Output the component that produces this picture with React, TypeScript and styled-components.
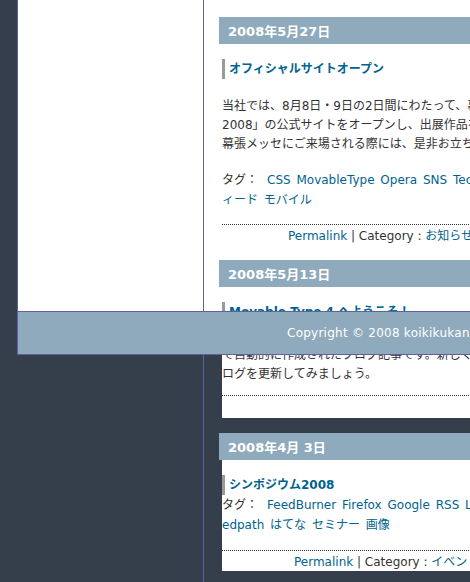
import React from "react";
import styled, { createGlobalStyle } from "styled-components";

const DARK = "#343f4b";
const LINE = "#62629a";
const BAR = "#8eaabc";
const LINK = "#00638f";

const GlobalStyle = createGlobalStyle`
  html, body {
    margin: 0;
    padding: 0;
    background: ${DARK};
  }
  body {
    font-family: "DejaVu Sans", "Noto Sans CJK JP", sans-serif;
    font-size: 12px;
    color: #333;
  }
`;

const Page = styled.div`
  position: relative;
  width: 470px;
  height: 582px;
  overflow: hidden;
  display: flex;
  align-items: flex-start;
  padding-left: 17px;
  box-sizing: border-box;
  background: ${DARK};
`;

const Sidebar = styled.aside`
  flex: 0 0 186px;
  height: 311px;
  box-sizing: border-box;
  border-left: 1px solid ${LINE};
  background: #fff;
`;

const Main = styled.main`
  flex: 0 0 560px;
  align-self: stretch;
  border-left: 1px solid ${LINE};
  padding: 17px 0 0 15px;
  background: linear-gradient(#fff 0, #fff 311px, transparent 311px);
`;

const DateHeader = styled.h2`
  margin: 0;
  height: 25px;
  padding: 2px 0 0 9px;
  line-height: 25px;
  background: ${BAR};
  color: #fff;
  font-size: 13px;
  font-weight: bold;
  white-space: pre;
`;

const EntryBox = styled.div`
  margin: 0 0 15px 3px;
  padding-top: 15px;
  background: #fff;
  overflow: hidden;
`;

const Title = styled.h3`
  margin: 0;
  height: 20px;
  line-height: 21px;
  border-left: 3px solid #999;
  padding-left: 4px;
  font-size: 12px;
  font-weight: bold;
  color: ${LINK};
  white-space: nowrap;
`;

const Body = styled.p<{ $gap: number }>`
  margin: ${(p) => p.$gap}px 0 0;
  line-height: 19px;
  white-space: nowrap;
`;

const Tags = styled.div<{ $gap: number }>`
  margin-top: ${(p) => p.$gap}px;
  line-height: 19.5px;
  white-space: nowrap;
`;

const TagLabel = styled.span`
  margin-right: 9px;
`;

const Tag = styled.a`
  color: ${LINK};
  text-decoration: none;
  margin-right: 2px;
`;

const Meta = styled.div<{ $gap: number; $h: number; $indent: number }>`
  margin-top: ${(p) => p.$gap}px;
  border-top: 1px dotted #333;
  height: ${(p) => p.$h}px;
  padding: 3px 0 0 ${(p) => p.$indent}px;
  line-height: 17px;
  white-space: nowrap;
`;

const MetaLink = styled.a`
  color: ${LINK};
  text-decoration: none;
`;

const Footer = styled.footer`
  position: absolute;
  top: 311px;
  left: 17px;
  right: -300px;
  height: 42px;
  line-height: 43px;
  border: 1px solid ${LINE};
  background: ${BAR};
  color: #fff;
  padding-left: 269px;
  font-size: 12px;
  letter-spacing: 0.25px;
  white-space: nowrap;
`;

const TagList = ({ items }: { items: string[] }) => (
  <>
    {items.map((t, i) => (
      <React.Fragment key={i}>
        <Tag href="#">{t}</Tag>{" "}
      </React.Fragment>
    ))}
  </>
);

const MetaLine = ({ category }: { category: string }) => (
  <>
    <MetaLink href="#">Permalink</MetaLink> | Category : <MetaLink href="#">{category}</MetaLink>
  </>
);

export default function App() {
  return (
    <>
      <GlobalStyle />
      <Page>
        <Sidebar />
        <Main>
          <DateHeader>2008年5月27日</DateHeader>
          <EntryBox>
            <Title>オフィシャルサイトオープン</Title>
            <Body $gap={18}>
              当社では、8月8日・9日の2日間にわたって、幕張メッセで開催される「デジタルコンテンツEXPO
              <br />
              2008」の公式サイトをオープンし、出展作品を紹介しています。
              <br />
              幕張メッセにご来場される際には、是非お立ち寄りください。
            </Body>
            <Tags $gap={17}>
              <div>
                <TagLabel>タグ：</TagLabel>
                <TagList items={["CSS", "MovableType", "Opera", "SNS", "Technorati", "フ"]} />
              </div>
              <div>
                <TagList items={["ィード", "モバイル"]} />
              </div>
            </Tags>
            <Meta $gap={14} $h={17} $indent={66}>
              <MetaLine category="お知らせ" />
            </Meta>
          </EntryBox>

          <DateHeader>2008年5月13日</DateHeader>
          <EntryBox>
            <Title>Movable Type 4 へようこそ！</Title>
            <Body $gap={5}>
              これは、Movable Type 4 のインストール完了と同時に、自
              <br />
              で自動的に作成されたブログ記事です。新しくブ
              <br />
              ログを更新してみましょう。
            </Body>
            <Meta $gap={11} $h={19} $indent={66} />
          </EntryBox>

          <DateHeader>2008年4月 3日</DateHeader>
          <EntryBox>
            <Title>シンポジウム2008</Title>
            <Tags $gap={1}>
              <div>
                <TagLabel>タグ：</TagLabel>
                <TagList items={["FeedBurner", "Firefox", "Google", "RSS", "Livedoor"]} />
              </div>
              <div>
                <TagList items={["edpath", "はてな", "セミナー", "画像"]} />
              </div>
            </Tags>
            <Meta $gap={15} $h={17} $indent={72}>
              <MetaLine category="イベント" />
            </Meta>
          </EntryBox>
        </Main>
        <Footer>Copyright © 2008 koikikukan All Rights Reserved.</Footer>
      </Page>
    </>
  );
}
